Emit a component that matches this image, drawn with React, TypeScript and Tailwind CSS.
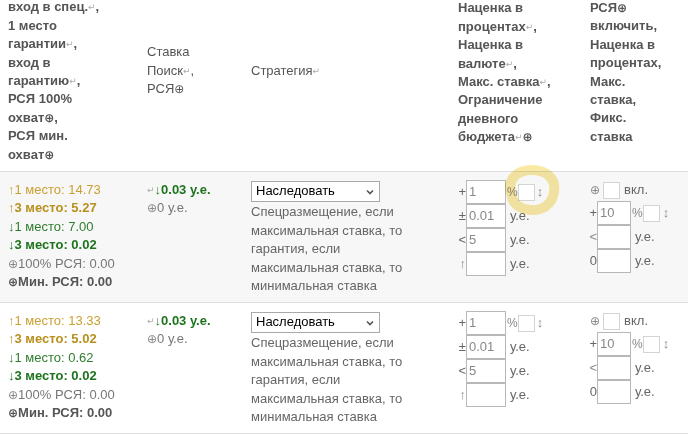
import React from 'react';

/* ── shared bits ── */
const Ret = () => <span className="text-[9px] text-[#aaa] font-normal align-[1px]">↵</span>;
const Plus = ({ dark = false }: { dark?: boolean }) => (
  <span className={`text-[12px] ${dark ? 'text-[#555]' : 'text-[#888]'}`}>⊕</span>
);

const Input = ({ value = '', w }: { value?: string; w: string }) => (
  <div className={`${w} h-6 border border-[#b8b8b8] bg-white pl-[2px] flex items-center text-[13px] text-[#888] shrink-0`}>
    {value}
  </div>
);

const Box = () => <div className="w-[17px] h-[17px] border border-[#d4d4d4] bg-white shrink-0" />;

const headerLines1 = [
  <>вход в спец.<Ret />,</>,
  <>1 место</>,
  <>гарантии<Ret />,</>,
  <>вход в</>,
  <>гарантию<Ret />,</>,
  <>РСЯ 100%</>,
  <>охват<Plus dark />,</>,
  <>РСЯ мин.</>,
  <>охват<Plus dark /></>,
];

const headerLines4 = [
  <>Наценка в</>,
  <>процентах<Ret />,</>,
  <>Наценка в</>,
  <>валюте<Ret />,</>,
  <>Макс. ставка<Ret />,</>,
  <>Ограничение</>,
  <>дневного</>,
  <>бюджета<Ret /><Plus dark /></>,
];

const headerLines5 = [
  <>РСЯ<Plus dark /></>,
  <>включить,</>,
  <>Наценка в</>,
  <>процентах,</>,
  <>Макс.</>,
  <>ставка,</>,
  <>Фикс.</>,
  <>ставка</>,
];

type Row = { p1: string; p3: string; g1: string; g3: string; bg: string };

const rows: Row[] = [
  { p1: '14.73', p3: '5.27', g1: '7.00', g3: '0.02', bg: 'bg-[#f7f7f7]' },
  { p1: '13.33', p3: '5.02', g1: '0.62', g3: '0.02', bg: 'bg-white' },
];

const DataRow = ({ r }: { r: Row }) => (
  <div className={`flex h-[131px] border-b border-[#dedede] ${r.bg} text-[13px] leading-[18.4px]`}>
    {/* prices */}
    <div className="w-[139px] pl-2 pt-[9px] shrink-0">
      <div className="text-[#c9a032]">↑1 место: {r.p1}</div>
      <div className="text-[#b8901c]"><span className="font-normal">↑</span><b>3 место: {r.p3}</b></div>
      <div className="text-[#2e7d2e]">↓1 место: {r.g1}</div>
      <div className="text-[#1d741d]"><span>↓</span><b>3 место: {r.g3}</b></div>
      <div className="text-[#777]"><Plus />100% РСЯ: 0.00</div>
      <div className="text-[#555] font-bold"><Plus dark />Мин. РСЯ: 0.00</div>
    </div>

    {/* bid */}
    <div className="w-[104px] pl-2 pt-[9px] shrink-0">
      <div className="text-[#1d741d]"><Ret /><span className="font-normal text-[#2e7d2e]">↓</span><b>0.03 у.е.</b></div>
      <div className="text-[#777]"><Plus />0 у.е.</div>
    </div>

    {/* strategy */}
    <div className="w-[204px] pl-2 pt-[9px] shrink-0">
      <div className="w-[129px] h-[21px] border border-[#a9a9a9] bg-white flex items-center justify-between pl-[4px] pr-[5px] text-black">
        <span>Наследовать</span>
        <svg width="8" height="6" viewBox="0 0 8 6">
          <path d="M1 1.5 L4 4.5 L7 1.5" fill="none" stroke="#555" strokeWidth="1.6" />
        </svg>
      </div>
      <div className="text-[#666] leading-[18.6px] pt-[1px]">
        Спецразмещение, если<br />
        максимальная ставка, то<br />
        гарантия, если<br />
        максимальная ставка, то<br />
        минимальная ставка
      </div>
    </div>

    {/* markups */}
    <div className="w-[133px] pl-2 pt-2 shrink-0 text-[#666]">
      <div className="flex items-center">
        <span className="w-[11px] text-right">+</span>
        <Input value="1" w="w-[40px]" />
        <span className="text-[#888] text-[12px] ml-[1px]">%</span>
        <Box />
        <span className="ml-[2px] text-[#888]">↕</span>
      </div>
      <div className="flex items-center">
        <span className="w-[11px] text-right">±</span>
        <Input value="0.01" w="w-[40px]" />
        <span className="ml-[4px]">у.е.</span>
      </div>
      <div className="flex items-center">
        <span className="w-[11px] text-right">&lt;</span>
        <Input value="5" w="w-[40px]" />
        <span className="ml-[4px]">у.е.</span>
      </div>
      <div className="flex items-center">
        <span className="w-[11px] text-right text-[#888]">↑</span>
        <Input w="w-[40px]" />
        <span className="ml-[4px]">у.е.</span>
      </div>
    </div>

    {/* network */}
    <div className="flex-1 pl-[10px] pt-2 text-[#666]">
      <div className="flex items-center h-[21px]">
        <Plus />
        <div className="ml-[3px]"><Box /></div>
        <span className="ml-[4px]">вкл.</span>
      </div>
      <div className="flex items-center">
        <span className="w-[7px] flex justify-end">+</span>
        <Input value="10" w="w-[34px]" />
        <span className="text-[#888] text-[12px] ml-[1px]">%</span>
        <Box />
        <span className="ml-[3px] text-[#888]">↕</span>
      </div>
      <div className="flex items-center">
        <span className="w-[7px] flex justify-end text-[#888]">&lt;</span>
        <Input w="w-[34px]" />
        <span className="ml-[4px]">у.е.</span>
      </div>
      <div className="flex items-center">
        <span className="w-[7px] flex justify-end">0</span>
        <Input w="w-[34px]" />
        <span className="ml-[4px]">у.е.</span>
      </div>
    </div>
  </div>
);

export default function App() {
  return (
    <div className="relative w-[688px] h-[434px] overflow-hidden bg-white font-['Liberation_Sans','DejaVu_Sans',sans-serif]">
      {/* ── header ── */}
      <div className="flex h-[172px] border-b border-[#dedede] text-[13px] leading-[18.4px] text-[#555]">
        <div className="w-[139px] pl-2 pb-[7px] flex flex-col justify-end font-bold shrink-0 whitespace-nowrap">
          {headerLines1.map((l, i) => <div key={i}>{l}</div>)}
        </div>
        <div className="w-[104px] pl-2 pb-[29px] flex flex-col justify-center shrink-0 whitespace-nowrap">
          <div>Ставка</div>
          <div>Поиск<Ret />,</div>
          <div>РСЯ<Plus dark /></div>
        </div>
        <div className="w-[204px] pl-2 pb-[29px] flex flex-col justify-center shrink-0">
          <div>Стратегия<Ret /></div>
        </div>
        <div className="w-[133px] pl-[11px] pb-[25px] flex flex-col justify-center font-bold shrink-0 whitespace-nowrap">
          {headerLines4.map((l, i) => <div key={i}>{l}</div>)}
        </div>
        <div className="flex-1 pl-[10px] pb-[26px] flex flex-col justify-center font-bold whitespace-nowrap">
          {headerLines5.map((l, i) => <div key={i}>{l}</div>)}
        </div>
      </div>

      {rows.map((r, i) => <DataRow key={i} r={r} />)}

      {/* hand-drawn highlight over the first checkbox */}
      <svg
        className="absolute left-[500px] top-[163px] pointer-events-none mix-blend-multiply"
        width="64"
        height="56"
        viewBox="0 0 64 56"
      >
        <path
          d="M11 31 C7 16 17 7 32 7 C47 7 56 16 54 29 C52 42 42 48 30 47 C20 46 13 41 12 34"
          fill="none"
          stroke="#f8e595"
          strokeOpacity="0.85"
          strokeWidth="10"
          strokeLinecap="round"
        />
      </svg>
    </div>
  );
}
